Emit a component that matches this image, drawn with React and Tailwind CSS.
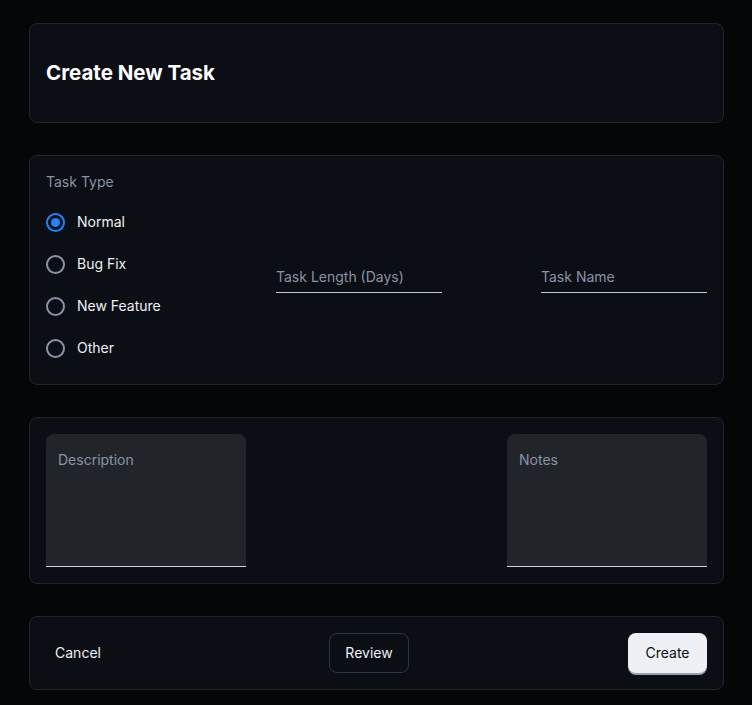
import { useState } from 'react';

const types = ['Normal', 'Bug Fix', 'New Feature', 'Other'];

const Card = ({ className = '', children }) => (
  <div className={`rounded-lg border border-[#20242c] bg-[#0b0e14] ${className}`}>{children}</div>
);

const App = () => {
  const [type, setType] = useState('Normal');

  return (
    <div className="min-h-screen bg-[#050608] pl-[29px] pt-[23px] pb-4 font-['Inter',sans-serif] text-sm text-[#eef0f4]">
      <div className="flex w-[695px] flex-col gap-8">
        {/* Header */}
        <Card className="flex h-[100px] items-center px-4">
          <h1 className="text-[20.5px] font-bold text-white">Create New Task</h1>
        </Card>

        {/* Type and fields */}
        <Card className="flex h-[230px] items-center justify-between px-4 pt-4 pb-4">
          <div className="flex w-[131px] flex-col self-start">
            <p className="text-sm text-[#8a93a6]">Task Type</p>
            <div className="mt-[19px] flex flex-col gap-[20px]">
              {types.map((t) => {
                const active = t === type;
                return (
                  <label key={t} className="flex h-[22px] cursor-pointer items-center gap-3" onClick={() => setType(t)}>
                    <span
                      className={`flex h-[19px] w-[19px] shrink-0 items-center justify-center rounded-full border-2 ${
                        active ? 'border-[#1a86ff]' : 'border-[#8a93a3]'
                      }`}
                    >
                      {active && <span className="h-[9px] w-[9px] rounded-full bg-[#1a86ff]" />}
                    </span>
                    <span className="whitespace-nowrap text-[#eef0f4]">{t}</span>
                  </label>
                );
              })}
            </div>
          </div>

          <div className="mt-[20px] w-[166px] border-b border-[#c4c8d0] pb-[5px]">
            <span className="text-[#8a93a6]">Task Length (Days)</span>
          </div>
          <div className="mt-[20px] w-[166px] border-b border-[#c4c8d0] pb-[5px]">
            <span className="text-[#8a93a6]">Task Name</span>
          </div>
        </Card>

        {/* Text areas */}
        <Card className="flex justify-between p-4">
          {['Description', 'Notes'].map((l) => (
            <div key={l} className="h-[133px] w-[200px] rounded-t-lg border-b border-[#d0d3d9] bg-[#212429] px-3 pt-4">
              <span className="text-[#8a93a6]">{l}</span>
            </div>
          ))}
        </Card>

        {/* Actions */}
        <Card className="flex h-[74px] items-center justify-between px-4">
          <button className="h-10 w-16 rounded-lg text-center text-[#eef0f4]">Cancel</button>
          <button className="h-10 w-20 rounded-lg border border-[#30343e] text-[#eef0f4]">Review</button>
          <button className="h-10 w-[79px] rounded-lg bg-[#eef0f5] text-[#0b0e14] shadow-[0_2px_0_#9aa0ab]">Create</button>
        </Card>
      </div>
    </div>
  );
};

export default App;
